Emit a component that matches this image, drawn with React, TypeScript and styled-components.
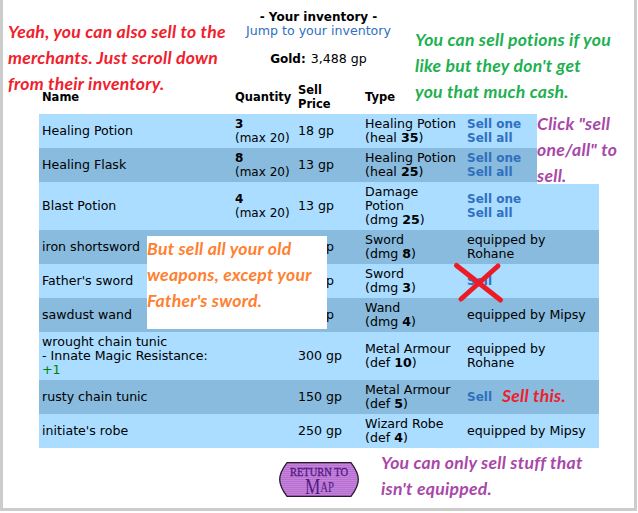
import React from "react";
import styled, { createGlobalStyle } from "styled-components";

const Global = createGlobalStyle`
  html, body { margin: 0; padding: 0; background: #fff; }
  body { font-family: "DejaVu Sans", Verdana, sans-serif; font-size: 12.6px; line-height: 14px; color: #000; }
`;

const Page = styled.div`
  position: relative;
  box-sizing: border-box;
  width: 637px;
  height: 511px;
  padding-top: 10px;
  background: #fff;
  border: solid #cccccc;
  border-width: 0 3px 3px 3px;
  overflow: hidden;
`;
const Header = styled.div`
  text-align: center;
  width: 631px;
`;
const Title = styled.div`
  font-weight: bold;
  font-size: 12px;
`;
const JumpLink = styled.a`
  display: block;
  color: #3070c0;
`;
const Gold = styled.div`
  margin-top: 14px;
  & b { font-size: 12px; margin-right: 1px; }
`;
const Table = styled.table`
  table-layout: fixed;
  width: 560px;
  margin: 17px 0 0 36px;
  border-collapse: collapse;
`;
const Th = styled.th`
  padding: 0 3px 3px;
  text-align: left;
  vertical-align: middle;
  font-size: 11.5px;
  font-weight: bold;
`;
const Row = styled.tr<{ $dark?: boolean }>`
  background: ${(p) => (p.$dark ? "#88bbdd" : "#aaddff")};
`;
const Td = styled.td`
  padding: 3px;
  vertical-align: middle;
`;
const QtyCell = styled(Td)`
  font-size: 12px;
`;
const Action = styled.a`
  display: block;
  color: #3070c0;
  font-size: 12px;
  font-weight: bold;
`;
const Bonus = styled.span`
  color: #008000;
`;
const Footer = styled.div`
  display: flex;
  justify-content: center;
  margin-top: 14px;
  width: 631px;
`;
const MapButton = styled.svg`
  display: block;
`;
const Note = styled.div<{ $color: string; $x: number; $y: number; $h?: number; $w?: number; $bg?: boolean }>`
  position: absolute;
  left: ${(p) => p.$x - 3}px;
  top: ${(p) => p.$y}px;
  ${(p) => (p.$w ? `width: ${p.$w}px;` : "")}
  ${(p) => (p.$h ? `height: ${p.$h}px;` : "")}
  ${(p) => (p.$bg ? "background: #fff;" : "")}
  box-sizing: border-box;
  color: ${(p) => p.$color};
  font-family: "Lato", "Open Sans", sans-serif;
  font-style: italic;
  font-weight: 700;
  font-size: 17.6px;
  letter-spacing: 0.25px;
  line-height: 26px;
  white-space: pre;
`;
const Cross = styled.svg`
  position: absolute;
  left: 449px;
  top: 259px;
`;

type Item = { name: React.ReactNode; qty: React.ReactNode; price: string; type: React.ReactNode; action: React.ReactNode };

const SellBoth = () => (
  <>
    <Action>Sell one</Action>
    <Action>Sell all</Action>
  </>
);
const Q = ({ n }: { n: number }) => (
  <>
    <b>{n}</b>
    <br />
    (max 20)
  </>
);
const Ty = ({ a, s, v }: { a: React.ReactNode; s: string; v: number }) => (
  <>
    {a}
    <br />({s} <b>{v}</b>)
  </>
);
const Rohane = () => (
  <>
    equipped by
    <br />
    Rohane
  </>
);

const items: Item[] = [
  { name: "Healing Potion", qty: <Q n={3} />, price: "18 gp", type: <Ty a="Healing Potion" s="heal" v={35} />, action: <SellBoth /> },
  { name: "Healing Flask", qty: <Q n={8} />, price: "13 gp", type: <Ty a="Healing Potion" s="heal" v={25} />, action: <SellBoth /> },
  {
    name: "Blast Potion",
    qty: <Q n={4} />,
    price: "13 gp",
    type: <Ty a={<>Damage<br />Potion</>} s="dmg" v={25} />,
    action: <SellBoth />,
  },
  { name: "iron shortsword", qty: "", price: "75 gp", type: <Ty a="Sword" s="dmg" v={8} />, action: <Rohane /> },
  { name: "Father's sword", qty: "", price: "50 gp", type: <Ty a="Sword" s="dmg" v={3} />, action: <Action>Sell</Action> },
  { name: "sawdust wand", qty: "", price: "50 gp", type: <Ty a="Wand" s="dmg" v={4} />, action: "equipped by Mipsy" },
  {
    name: (
      <>
        wrought chain tunic
        <br />- Innate Magic Resistance:
        <br />
        <Bonus>+1</Bonus>
      </>
    ),
    qty: "",
    price: "300 gp",
    type: <Ty a="Metal Armour" s="def" v={10} />,
    action: <Rohane />,
  },
  { name: "rusty chain tunic", qty: "", price: "150 gp", type: <Ty a="Metal Armour" s="def" v={5} />, action: <Action>Sell</Action> },
  { name: "initiate's robe", qty: "", price: "250 gp", type: <Ty a="Wizard Robe" s="def" v={4} />, action: "equipped by Mipsy" },
];

export default function App() {
  return (
    <>
      <Global />
      <Page>
        <Header>
          <Title>- Your inventory -</Title>
          <JumpLink>Jump to your inventory</JumpLink>
          <Gold>
            <b>Gold:</b> 3,488 gp
          </Gold>
        </Header>
        <Table>
          <colgroup>
            <col width={193} />
            <col width={63} />
            <col width={67} />
            <col width={102} />
            <col width={135} />
          </colgroup>
          <thead>
            <tr>
              <Th>Name</Th>
              <Th>Quantity</Th>
              <Th>
                Sell
                <br />
                Price
              </Th>
              <Th>Type</Th>
              <Th />
            </tr>
          </thead>
          <tbody>
            {items.map((it, i) => (
              <Row key={i} $dark={i % 2 === 1}>
                <Td>{it.name}</Td>
                <QtyCell>{it.qty}</QtyCell>
                <Td>{it.price}</Td>
                <Td>{it.type}</Td>
                <Td>{it.action}</Td>
              </Row>
            ))}
          </tbody>
        </Table>
        <Footer>
          <MapButton width="80" height="35" viewBox="0 0 80 35" role="img" aria-label="Return to map">
            <defs>
              <pattern id="stripes" width="2" height="2" patternUnits="userSpaceOnUse">
                <rect width="2" height="1" fill="#c583dc" />
                <rect y="1" width="2" height="1" fill="#b870d0" />
              </pattern>
            </defs>
            <path
              d="M8 .7H72C74.500 4 79.300 10 79.300 17.500 79.300 25 74.500 31 72 34.300H8C5.500 31 .7 25 .7 17.500 .7 10 5.500 4 8 .7Z"
              fill="url(#stripes)"
              stroke="#2a1a30"
              strokeWidth="1.300"
            />
            <text x="11" y="14" textLength="58" lengthAdjust="spacingAndGlyphs" fontFamily="Liberation Serif, serif" fontSize="11.500" fontWeight="400" stroke="#4f1a80" strokeWidth=".3" fill="#4f1a80">
              RETURN TO
            </text>
            <text x="26" y="31.500" textLength="29" lengthAdjust="spacingAndGlyphs" fontFamily="Liberation Serif, serif" fontWeight="400" fill="#4f1a80">
              <tspan fontSize="24">M</tspan>
              <tspan fontSize="15" dy="-2">AP</tspan>
            </text>
          </MapButton>
        </Footer>

        <Note $color="#f0202c" $x={8} $y={19}>
          {"Yeah, you can also sell to the\nmerchants. Just scroll down\nfrom their inventory."}
        </Note>
        <Note $color="#20b050" $x={415} $y={27}>
          {"You can sell potions if you\nlike but they don't get\nyou that much cash."}
        </Note>
        <Note $color="#a848a8" $x={537} $y={111} $w={63} $h={73} $bg>
          {"Click \"sell\none/all\" to\nsell."}
        </Note>
        <Note $color="#ff8030" $x={147} $y={236} $w={180} $h={93} $bg>
          {"But sell all your old\nweapons, except your\nFather's sword."}
        </Note>
        <Note $color="#f0202c" $x={502} $y={383}>
          Sell this.
        </Note>
        <Note $color="#a848a8" $x={381} $y={450}>
          {"You can only sell stuff that\nisn't equipped."}
        </Note>
        <Cross width="60" height="50" viewBox="0 0 60 50">
          <path d="M4.500 6.500 48.500 41M9 40 46 7" stroke="#ed1c24" strokeWidth="5" strokeLinecap="round" fill="none" />
        </Cross>
      </Page>
    </>
  );
}
